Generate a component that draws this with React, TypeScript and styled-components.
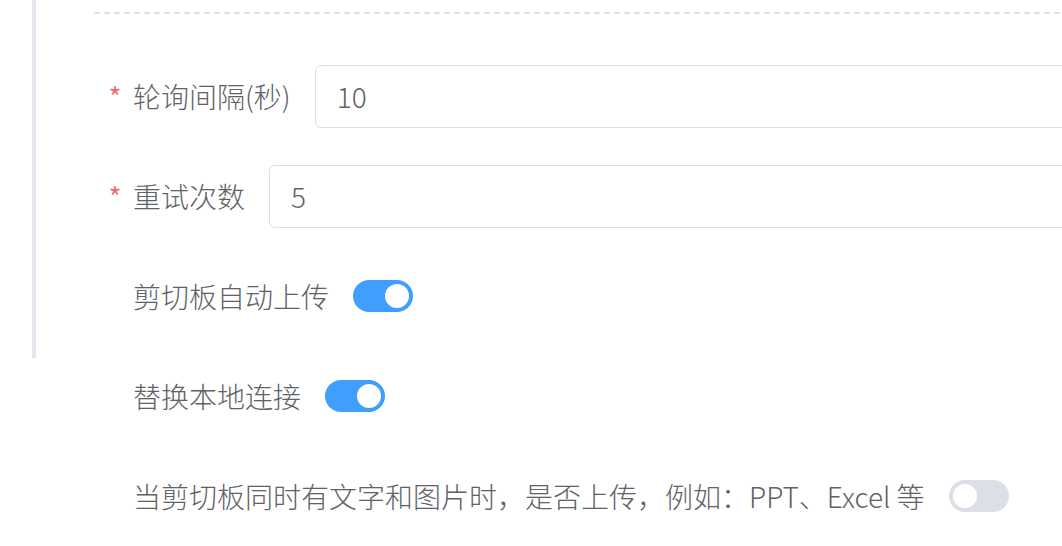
import React from "react";
import styled, { createGlobalStyle } from "styled-components";

const Global = createGlobalStyle`
  html, body {
    margin: 0;
    padding: 0;
    background: #ffffff;
    overflow: hidden;
  }
  body {
    font-family: "Noto Sans CJK SC", "Noto Sans", sans-serif;
    font-weight: 300;
    color: #606266;
  }
`;

const Page = styled.div`
  width: 1062px;
  height: 546px;
  overflow: hidden;
  padding-left: 32px;
  box-sizing: border-box;
`;

const Section = styled.div`
  border-left: 4px solid #e4e7ed;
  padding-left: 58px;
  padding-top: 12px;
  padding-bottom: 30px;
  display: flex;
  flex-direction: column;
`;

const Divider = styled.div`
  height: 2px;
  width: 1100px;
  background-image: repeating-linear-gradient(
    to right,
    #dcdfe6 0,
    #dcdfe6 6px,
    transparent 6px,
    transparent 10px
  );
  margin-bottom: 50px;
`;

const Rows = styled.div<{ $inset: number; $top?: number }>`
  display: flex;
  flex-direction: column;
  gap: 36px;
  padding-left: ${(p) => p.$inset}px;
  padding-top: ${(p) => p.$top ?? 0}px;
`;

const Item = styled.div`
  display: flex;
  align-items: center;
  height: 64px;
`;

const Label = styled.label`
  display: flex;
  align-items: center;
  font-size: 28px;
  line-height: 64px;
  color: #606266;
  white-space: nowrap;
  padding-right: 24px;
`;

const Star = styled.span`
  color: #f56c6c;
  font-weight: 400;
  margin-left: -25px;
  margin-right: 11px;
  width: 14px;
  text-align: center;
`;

const Input = styled.div`
  width: 900px;
  height: 63px;
  box-sizing: border-box;
  border: 1px solid #dcdfe6;
  border-radius: 6px;
  padding: 0 21px;
  display: flex;
  align-items: center;
  font-size: 28px;
  color: #606266;
  flex-shrink: 0;
`;

const Track = styled.div<{ $on: boolean }>`
  width: 60px;
  height: 32px;
  border-radius: 16px;
  background: ${(p) => (p.$on ? "#409eff" : "#dcdfe6")};
  display: flex;
  align-items: center;
  justify-content: ${(p) => (p.$on ? "flex-end" : "flex-start")};
  padding: 0 4px;
  box-sizing: border-box;
  flex-shrink: 0;
`;

const Knob = styled.span`
  width: 24px;
  height: 24px;
  border-radius: 50%;
  background: #ffffff;
`;

const Switch = ({ on }: { on: boolean }) => (
  <Track $on={on}>
    <Knob />
  </Track>
);

export default function App() {
  return (
    <>
      <Global />
      <Page>
        <Section>
          <Divider />
          <Rows $inset={39}>
            <Item>
              <Label>
                <Star>*</Star>轮询间隔(秒)
              </Label>
              <Input>10</Input>
            </Item>
            <Item>
              <Label>
                <Star>*</Star>重试次数
              </Label>
              <Input>5</Input>
            </Item>
            <Item>
              <Label>剪切板自动上传</Label>
              <Switch on />
            </Item>
          </Rows>
        </Section>
        <Rows $inset={101} $top={6}>
          <Item>
            <Label>替换本地连接</Label>
            <Switch on />
          </Item>
          <Item>
            <Label>当剪切板同时有文字和图片时，是否上传，例如：PPT、Excel 等</Label>
            <Switch on={false} />
          </Item>
        </Rows>
      </Page>
    </>
  );
}
